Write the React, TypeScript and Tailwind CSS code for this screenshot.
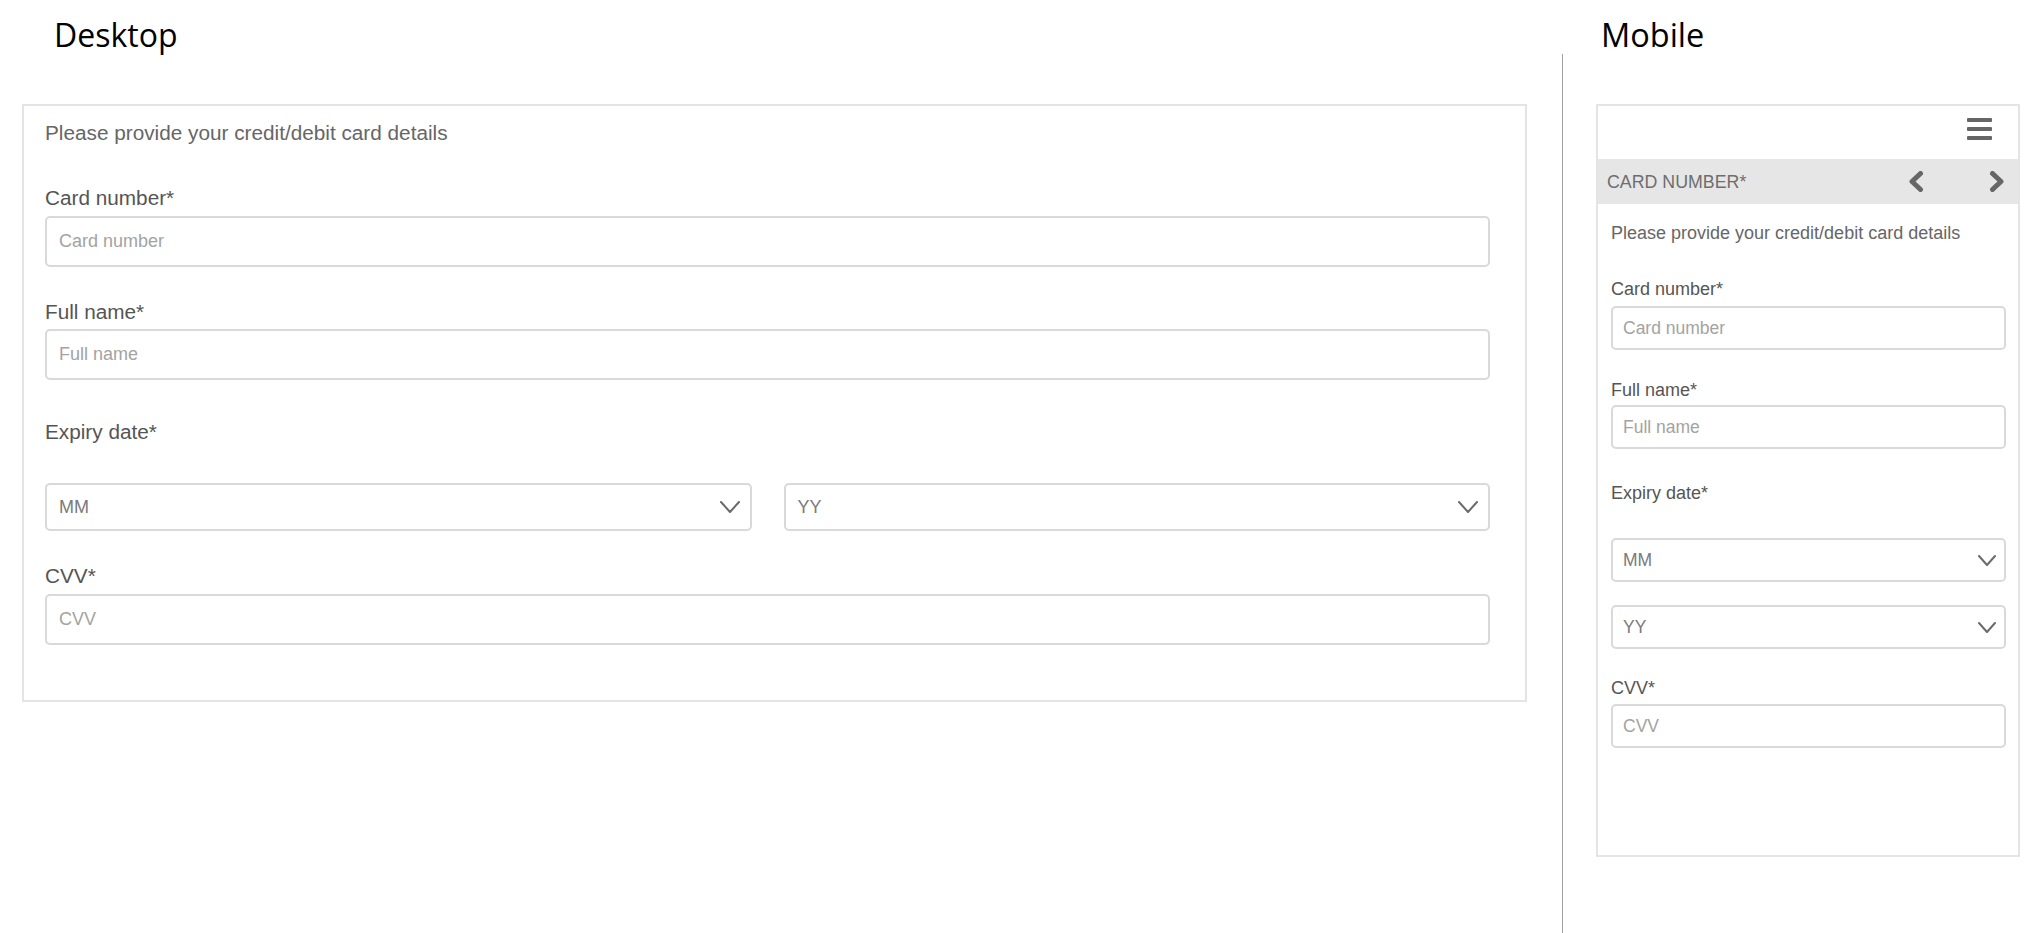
import React from "react";

const SelectChevron = ({ w, h }: { w: number; h: number }) => (
  <svg width={w} height={h} viewBox={`0 0 ${w} ${h}`} fill="none">
    <polyline
      points={`1,1 ${w / 2},${h - 1} ${w - 1},1`}
      stroke="#6b6b6b"
      strokeWidth="2"
      strokeLinecap="round"
      strokeLinejoin="round"
    />
  </svg>
);

export default function App() {
  const formFont = { fontFamily: '"Liberation Sans", Arial, sans-serif' };
  const titleFont = { fontFamily: '"Open Sans", "Noto Sans", sans-serif' };
  return (
    <div className="flex h-[933px] w-[2043px] overflow-hidden bg-white" style={formFont}>
      {/* Desktop column */}
      <div className="w-[1527px] flex-none pl-[22px]">
        <div className="h-[104px] pl-[32px] pt-[15px]">
          <div className="text-[32px] leading-[40px] text-black" style={titleFont}>
            Desktop
          </div>
        </div>
        <div className="h-[598px] w-[1505px] border-2 border-[#e4e4e4] pl-[21px] pr-[35px] pt-[15px]">
          <div className="text-[20.75px] leading-[24px] text-[#666666]">Please provide your credit/debit card details</div>

          <div className="mt-[41px] text-[20.75px] leading-[24px] text-[#555555]">Card number*</div>
          <div className="mt-[6px] flex h-[51px] items-center rounded-[5px] border-2 border-[#d9d9d9] pl-[12px] text-[18px] text-[#a3a3a3]">
            Card number
          </div>

          <div className="mt-[33px] text-[20.75px] leading-[24px] text-[#555555]">Full name*</div>
          <div className="mt-[5px] flex h-[51px] items-center rounded-[5px] border-2 border-[#d9d9d9] pl-[12px] text-[18px] text-[#a3a3a3]">
            Full name
          </div>

          <div className="mt-[40px] text-[20.75px] leading-[24px] text-[#555555]">Expiry date*</div>
          <div className="mt-[39px] flex gap-[32px]">
            <div className="flex h-[48px] flex-1 items-center justify-between rounded-[5px] border-2 border-[#d9d9d9] pl-[12px] pr-[10px] text-[18px] text-[#7a7a7a]">
              <span>MM</span>
              <SelectChevron w={20} h={12} />
            </div>
            <div className="flex h-[48px] flex-1 items-center justify-between rounded-[5px] border-2 border-[#d9d9d9] pl-[12px] pr-[10px] text-[18px] text-[#7a7a7a]">
              <span>YY</span>
              <SelectChevron w={20} h={12} />
            </div>
          </div>

          <div className="mt-[33px] text-[20.75px] leading-[24px] text-[#555555]">CVV*</div>
          <div className="mt-[6px] flex h-[51px] items-center rounded-[5px] border-2 border-[#d9d9d9] pl-[12px] text-[18px] text-[#a3a3a3]">
            CVV
          </div>
        </div>
      </div>

      {/* Divider */}
      <div className="ml-[35px] mt-[54px] h-[879px] w-px flex-none bg-[#a0a0a0]" />

      {/* Mobile column */}
      <div className="ml-[33px] w-[424px] flex-none">
        <div className="h-[104px] pl-[5px] pt-[15px]">
          <div className="text-[32.5px] leading-[40px] text-black" style={titleFont}>
            Mobile
          </div>
        </div>
        <div className="h-[753px] w-[424px] border-2 border-[#e4e4e4]">
          <div className="flex h-[53px] items-start justify-end pr-[26px] pt-[12px]">
            <div className="flex flex-col gap-[5px]">
              <div className="h-[4px] w-[25px] rounded-[1px] bg-[#666666]" />
              <div className="h-[4px] w-[25px] rounded-[1px] bg-[#666666]" />
              <div className="h-[4px] w-[25px] rounded-[1px] bg-[#666666]" />
            </div>
          </div>
          <div className="flex h-[45px] items-center bg-[#e6e6e6] pl-[9px] pr-[12px]">
            <span className="flex-1 text-[17.8px] leading-[20px] text-[#6e6e6e]">CARD NUMBER*</span>
            <svg width="17" height="21" viewBox="0 0 17 21" fill="none">
              <polyline points="13.5,2.5 5,10.5 13.5,18.5" stroke="#666666" strokeWidth="5" strokeLinejoin="round" strokeLinecap="round" />
            </svg>
            <div className="w-[65px]" />
            <svg width="17" height="21" viewBox="0 0 17 21" fill="none">
              <polyline points="3.5,2.5 12,10.5 3.5,18.5" stroke="#666666" strokeWidth="5" strokeLinejoin="round" strokeLinecap="round" />
            </svg>
          </div>

          <div className="pl-[13px] pr-[12px]">
            <div className="mt-[19px] text-[18px] leading-[21px] text-[#666666]">Please provide your credit/debit card details</div>

            <div className="mt-[35px] text-[18px] leading-[21px] text-[#555555]">Card number*</div>
            <div className="mt-[6px] flex h-[44px] items-center rounded-[5px] border-2 border-[#d9d9d9] pl-[10px] text-[17.5px] text-[#a3a3a3]">
              Card number
            </div>

            <div className="mt-[30px] text-[18px] leading-[21px] text-[#555555]">Full name*</div>
            <div className="mt-[4px] flex h-[44px] items-center rounded-[5px] border-2 border-[#d9d9d9] pl-[10px] text-[17.5px] text-[#a3a3a3]">
              Full name
            </div>

            <div className="mt-[34px] text-[18px] leading-[21px] text-[#555555]">Expiry date*</div>
            <div className="mt-[34px] flex h-[44px] items-center justify-between rounded-[5px] border-2 border-[#d9d9d9] pl-[10px] pr-[8px] text-[17.5px] text-[#7a7a7a]">
              <span>MM</span>
              <SelectChevron w={18} h={11} />
            </div>
            <div className="mt-[23px] flex h-[44px] items-center justify-between rounded-[5px] border-2 border-[#d9d9d9] pl-[10px] pr-[8px] text-[17.5px] text-[#7a7a7a]">
              <span>YY</span>
              <SelectChevron w={18} h={11} />
            </div>

            <div className="mt-[29px] text-[18px] leading-[21px] text-[#555555]">CVV*</div>
            <div className="mt-[5px] flex h-[44px] items-center rounded-[5px] border-2 border-[#d9d9d9] pl-[10px] text-[17.5px] text-[#a3a3a3]">
              CVV
            </div>
          </div>
        </div>
      </div>
    </div>
  );
}
